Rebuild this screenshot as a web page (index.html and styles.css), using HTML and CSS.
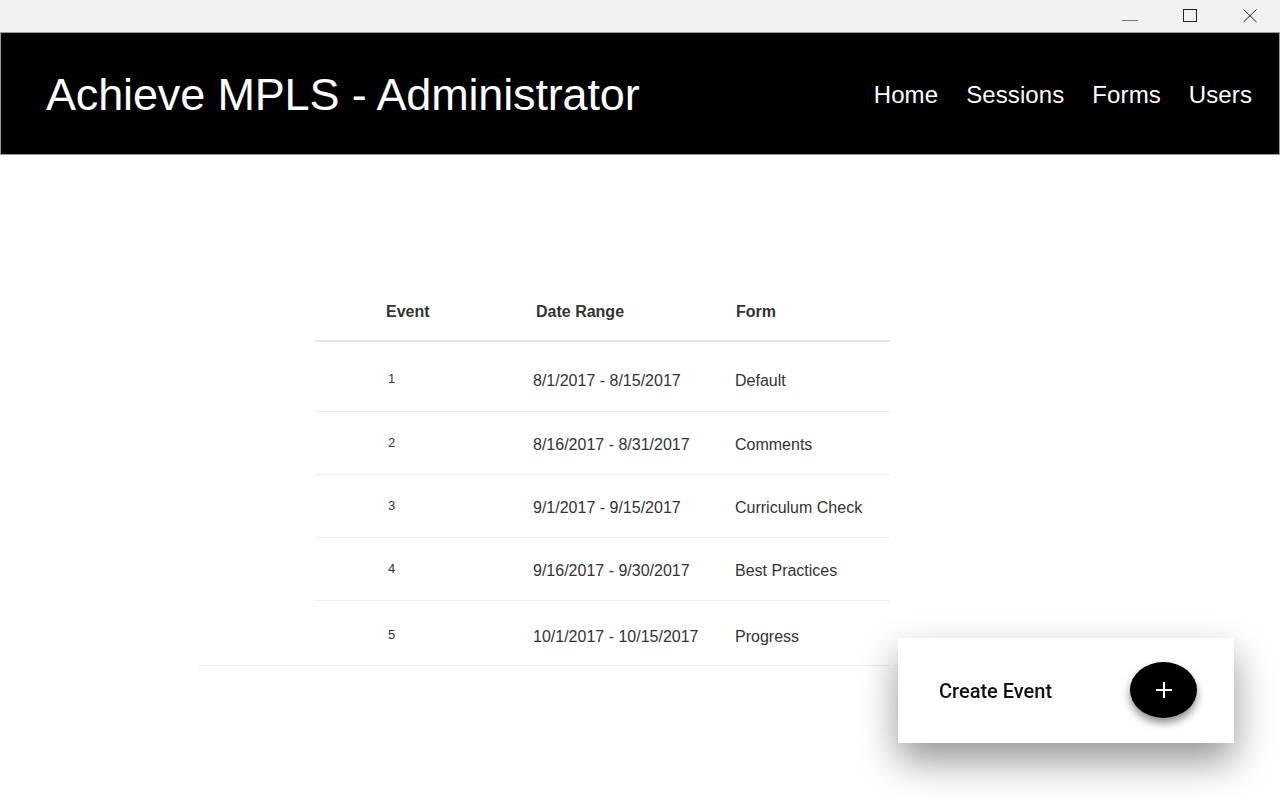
FILE: index.html
```html
<!DOCTYPE html>
<html>
<head>
<meta charset="utf-8">
<link rel="stylesheet" href="styles.css">
</head>
<body>
<div class="titlebar">
  <div class="winbtn"><svg width="18" height="12" viewBox="0 0 18 12"><line x1="1" y1="10.5" x2="17" y2="10.5" stroke="#7a7a7a" stroke-width="1"/></svg></div>
  <div class="winbtn"><svg width="16" height="16" viewBox="0 0 16 16"><rect x="1.5" y="1.5" width="13" height="12" fill="none" stroke="#222" stroke-width="1"/></svg></div>
  <div class="winbtn"><svg width="16" height="16" viewBox="0 0 16 16"><path d="M1.5 1.5 L14.5 14 M14.5 1.5 L1.5 14" stroke="#222" stroke-width="1" fill="none"/></svg></div>
</div>
<header class="header">
  <h1 class="title">Achieve MPLS - Administrator</h1>
  <nav class="nav">
    <a>Home</a>
    <a>Sessions</a>
    <a>Forms</a>
    <a>Users</a>
  </nav>
</header>
<main class="main">
  <div class="events">
    <div class="row head">
      <div class="c1">Event</div>
      <div class="c2">Date Range</div>
      <div class="c3">Form</div>
    </div>
    <div class="row first">
      <div class="c1 num">1</div>
      <div class="c2">8/1/2017 - 8/15/2017</div>
      <div class="c3">Default</div>
    </div>
    <div class="row">
      <div class="c1 num">2</div>
      <div class="c2">8/16/2017 - 8/31/2017</div>
      <div class="c3">Comments</div>
    </div>
    <div class="row">
      <div class="c1 num">3</div>
      <div class="c2">9/1/2017 - 9/15/2017</div>
      <div class="c3">Curriculum Check</div>
    </div>
    <div class="row">
      <div class="c1 num">4</div>
      <div class="c2">9/16/2017 - 9/30/2017</div>
      <div class="c3">Best Practices</div>
    </div>
    <div class="row last">
      <div class="c1 num">5</div>
      <div class="c2">10/1/2017 - 10/15/2017</div>
      <div class="c3">Progress</div>
    </div>
  </div>
</main>
<div class="card">
  <span class="card-label">Create Event</span>
  <button class="fab"><svg width="20" height="20" viewBox="0 0 20 20"><path d="M10 2 V18 M2 10 H18" stroke="#fff" stroke-width="2" fill="none"/></svg></button>
</div>
</body>
</html>
```
FILE: styles.css
```css
html, body {
  margin: 0;
  padding: 0;
  background: #fff;
  font-family: "Liberation Sans", Arial, sans-serif;
  height: 800px;
  overflow: hidden;
}
.titlebar {
  height: 32px;
  background: #f1f1f1;
  display: flex;
  justify-content: flex-end;
}
.winbtn {
  width: 60px;
  height: 32px;
  display: flex;
  align-items: center;
  justify-content: center;
}
.header {
  box-sizing: border-box;
  height: 123px;
  background: #000;
  border: 1px solid #9a9a9a;
  display: flex;
  align-items: center;
  justify-content: space-between;
  padding: 0 27px 0 45px;
  color: #fff;
}
.title {
  margin: 0;
  font-weight: normal;
  font-size: 45px;
  letter-spacing: -0.15px;
  position: relative;
  top: 1px;
}
.nav {
  display: flex;
  gap: 28px;
  font-size: 24px;
  position: relative;
  top: 1px;
}
.nav a {
  letter-spacing: 0.1px;
}
.main {
  padding-top: 126px;
}
.events {
  margin-left: 199px;
  width: 691px;
  border-bottom: 1px solid #ebebeb;
  color: #333;
}
.row {
  box-sizing: border-box;
  margin-left: 116px;
  height: 63px;
  padding-top: 24px;
  display: flex;
  align-items: flex-start;
  border-bottom: 1px solid #eeeeee;
  font-size: 16px;
  line-height: 18px;
}
.row.head {
  height: 61px;
  padding-top: 22px;
  font-weight: bold;
  border-bottom: 2px solid #e6e6e6;
}
.row.first {
  height: 70px;
  padding-top: 30px;
}
.row.last {
  border-bottom: none;
  height: 64px;
  padding-top: 27px;
}
.c1 {
  box-sizing: border-box;
  width: 218px;
  padding-left: 71px;
}
.c2 {
  width: 202px;
}
.c3 {
  flex: 1;
}
.head .c2 {
  padding-left: 3px;
  width: 199px;
}
.head .c3 {
  padding-left: 1px;
}
.num {
  font-size: 13px;
  padding-left: 73px;
  position: relative;
  top: -2px;
}
.card {
  position: fixed;
  right: 46px;
  bottom: 57px;
  width: 336px;
  height: 105px;
  box-sizing: border-box;
  background: #fff;
  box-shadow: 0 18px 38px rgba(0, 0, 0, 0.42);
  display: flex;
  align-items: center;
  justify-content: space-between;
  padding: 0 37px 0 41px;
}
.card-label {
  font-family: Roboto, "Liberation Sans", sans-serif;
  font-weight: 500;
  font-size: 20px;
  color: #111;
}
.fab {
  width: 67px;
  height: 56px;
  border-radius: 50%;
  background: #000;
  border: none;
  display: flex;
  align-items: center;
  justify-content: center;
  box-shadow: 0 5px 8px rgba(0, 0, 0, 0.45);
  padding: 0;
  margin-top: -2px;
}
```
